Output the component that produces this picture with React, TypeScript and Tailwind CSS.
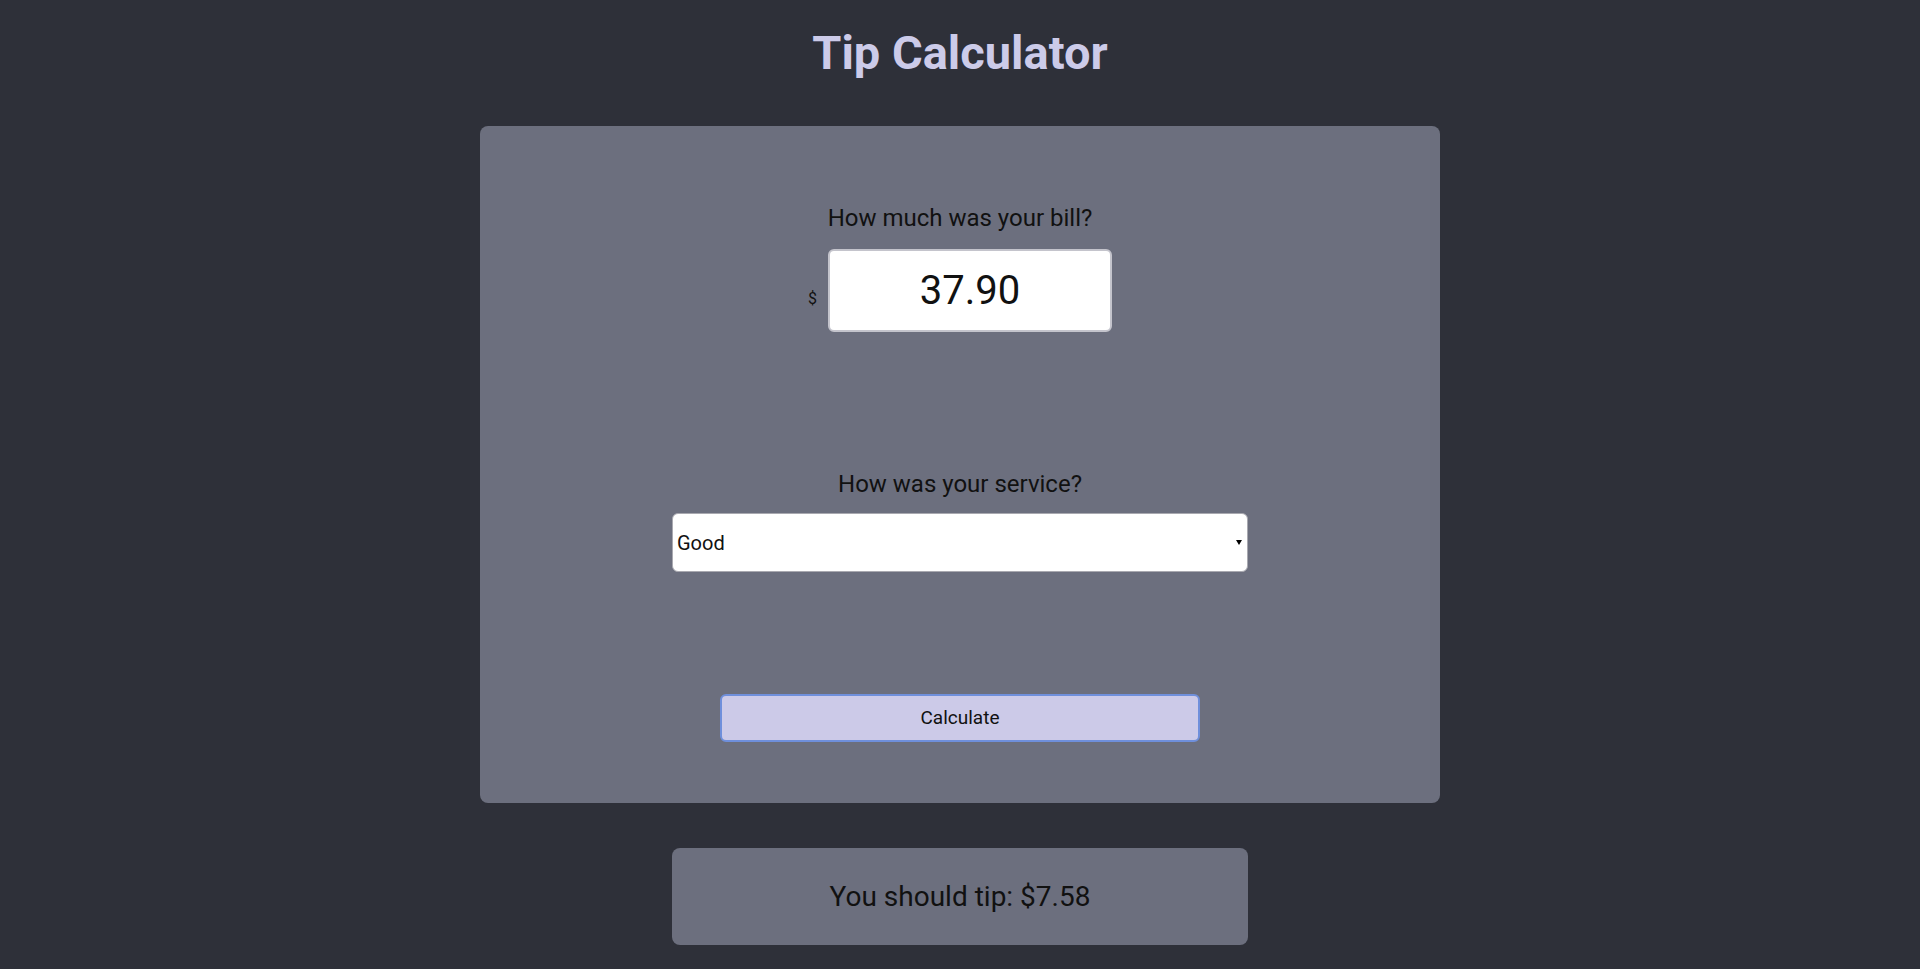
import { useState } from 'react'

const services = [
  { label: 'Outstanding', rate: 0.3 },
  { label: 'Good', rate: 0.2 },
  { label: 'Ok', rate: 0.15 },
  { label: 'Bad', rate: 0.1 },
  { label: 'Terrible', rate: 0.05 },
]

export default function App() {
  const [bill, setBill] = useState('37.90')
  const [service, setService] = useState('Good')
  const [tip, setTip] = useState('7.58')

  const calculate = () => {
    const rate = services.find((s) => s.label === service)?.rate ?? 0
    const amount = parseFloat(bill) || 0
    setTip((amount * rate).toFixed(2))
  }

  return (
    <div className="flex min-h-screen flex-col items-center bg-[#2e3039] font-['Roboto',sans-serif] text-[#111]">
      <h1 className="mt-[29px] h-[47px] text-[47px] font-bold leading-none text-[#cccbe9]">Tip Calculator</h1>

      <section className="mt-[50px] flex w-[960px] flex-col items-center rounded-lg bg-[#6c6f7e] pb-[61px] pt-[80px]">
        <label htmlFor="bill" className="text-[24px] leading-none">
          How much was your bill?
        </label>
        <div className="mt-[19px] flex items-baseline gap-[11px]">
          <span className="text-[16px]">$</span>
          <input
            id="bill"
            type="text"
            value={bill}
            onChange={(e) => setBill(e.target.value)}
            className="h-[83px] w-[284px] rounded-md border-2 border-[#c4c4cc] bg-white text-center text-[40px] outline-none"
          />
        </div>

        <label htmlFor="service" className="mt-[140px] text-[24px] leading-none">
          How was your service?
        </label>
        <div className="relative mt-[17px]">
          <select
            id="service"
            value={service}
            onChange={(e) => setService(e.target.value)}
            className="h-[59px] w-[576px] appearance-none rounded-md border border-[#a9a9b0] bg-white pl-[4px] text-[20px] outline-none"
          >
            {services.map((s) => (
              <option key={s.label} value={s.label}>
                {s.label}
              </option>
            ))}
          </select>
          <svg
            className="pointer-events-none absolute right-[6px] top-[27px]"
            width="6"
            height="5"
            viewBox="0 0 6 5"
          >
            <path d="M0 0h6L3 5z" fill="#000" />
          </svg>
        </div>

        <button
          type="button"
          onClick={calculate}
          className="mt-[122px] h-[48px] w-[480px] rounded-md border-2 border-[#6f8fdb] bg-[#cccae8] text-[19px]"
        >
          Calculate
        </button>
      </section>

      <div className="mt-[45px] flex h-[97px] w-[576px] items-center justify-center rounded-lg bg-[#6c6f7e] text-[28px]">
        You should tip: ${tip}
      </div>
    </div>
  )
}
